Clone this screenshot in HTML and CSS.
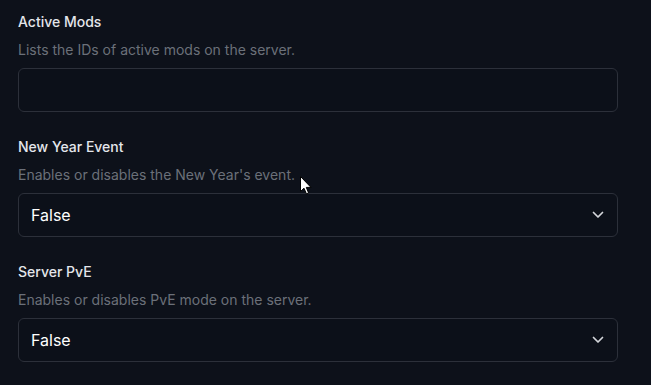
FILE: index.html
```html
<!DOCTYPE html>
<html lang="en">
<head>
	<meta charset="UTF-8">
	<title>Server settings</title>
	<link rel="stylesheet" href="styles.css">
</head>
<body>
	<div id="content">
		<section class="field">
			<label class="label">Active Mods</label>
			<p class="desc">Lists the IDs of active mods on the server.</p>
			<input type="text" class="text">
		</section>
		<section class="field">
			<label class="label">New Year Event</label>
			<p class="desc">Enables or disables the New Year's event.</p>
			<div class="select">
				<span>False</span>
				<svg class="chev" width="12" height="8" viewBox="0 0 12 8"><path d="M1.5 1.5 L6 6 L10.5 1.5" fill="none" stroke="#d4d6db" stroke-width="1.7" stroke-linecap="round" stroke-linejoin="round"/></svg>
			</div>
		</section>
		<section class="field">
			<label class="label">Server PvE</label>
			<p class="desc">Enables or disables PvE mode on the server.</p>
			<div class="select">
				<span>False</span>
				<svg class="chev" width="12" height="8" viewBox="0 0 12 8"><path d="M1.5 1.5 L6 6 L10.5 1.5" fill="none" stroke="#d4d6db" stroke-width="1.7" stroke-linecap="round" stroke-linejoin="round"/></svg>
			</div>
		</section>
	</div>
	<svg class="cursor" width="12" height="19" viewBox="0 0 12 19"><path d="M0.5 0.5 L0.5 15.5 L4 12.2 L6.4 17.8 L8.6 16.9 L6.3 11.4 L11 11.4 Z" fill="#fff" stroke="#000" stroke-width="1"/></svg>
</body>
</html>
```

FILE: styles.css
```css
* {margin: 0; padding: 0; box-sizing: border-box;}
html, body {background: #0d111a; height: 100%;}
body {font-family: Inter, "Liberation Sans", sans-serif; font-size: 14px; line-height: 20px; position: relative; overflow: hidden;}
#content {width: 600px; margin-left: 18px; padding-top: 12px; display: flex; flex-direction: column; gap: 25px;}
.field {display: flex; flex-direction: column;}
.field .label {font-weight: 500; color: #e4e6eb;}
.field .desc {margin-top: 8px; color: #6b7079;}
.field .text, .field .select {margin-top: 8px; width: 600px; height: 44px; border: 1px solid #2c303a; border-radius: 6px; background: #0c1019;}
.field .text {outline: none;}
.field .select {display: flex; align-items: center; justify-content: space-between; padding: 0 13px 0 12px; color: #fff; font-size: 16px;}
.cursor {position: absolute; left: 300px; top: 176px;}
```
